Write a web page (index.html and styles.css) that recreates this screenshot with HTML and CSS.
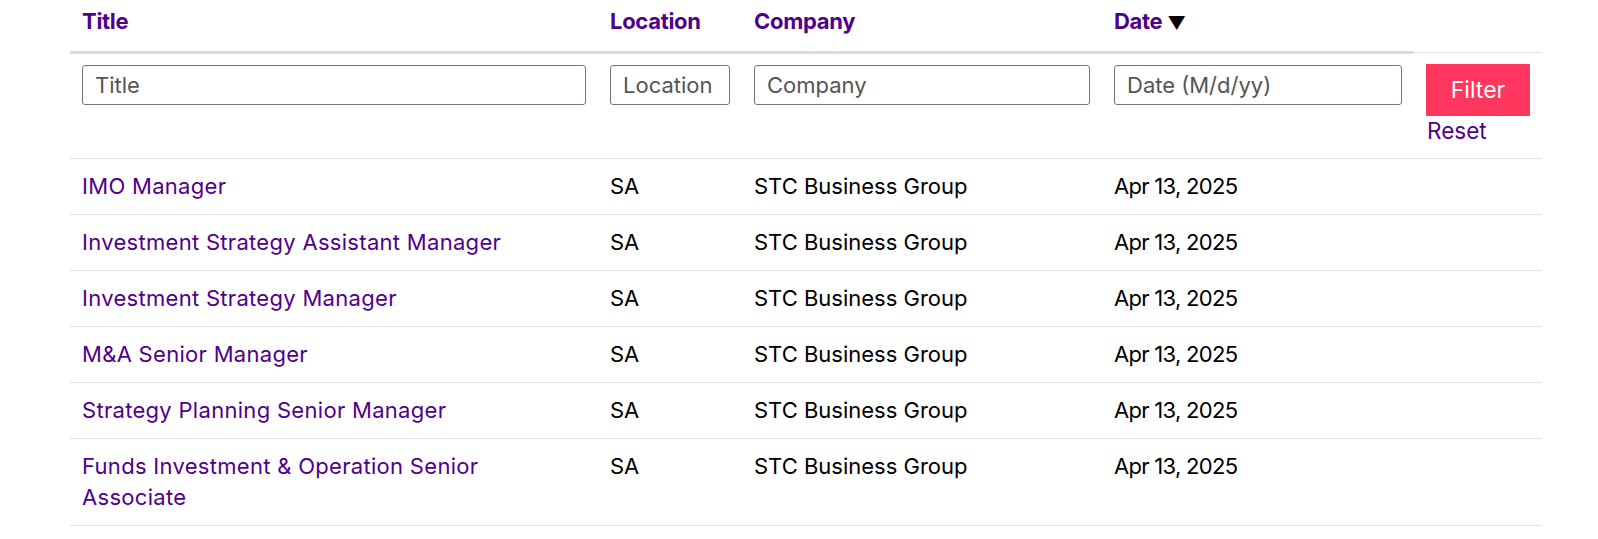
FILE: index.html
```html
<!DOCTYPE html>
<html lang="en">
<head>
<meta charset="utf-8">
<title>Jobs</title>
<link rel="stylesheet" href="styles.css">
</head>
<body>
<div class="wrap">
<table class="jobs">
  <colgroup>
    <col class="c-title"><col class="c-loc"><col class="c-comp"><col class="c-date"><col class="c-act">
  </colgroup>
  <thead>
    <tr class="head">
      <th>Title</th>
      <th>Location</th>
      <th>Company</th>
      <th>Date <span class="sort">▼</span></th>
      <th class="act"></th>
    </tr>
    <tr class="filters">
      <td><input class="inp" type="text" placeholder="Title"></td>
      <td><input class="inp" type="text" placeholder="Location"></td>
      <td><input class="inp" type="text" placeholder="Company"></td>
      <td><input class="inp" type="text" placeholder="Date (M/d/yy)"></td>
      <td><button class="btn" type="button">Filter</button><a class="reset" href="#">Reset</a></td>
    </tr>
  </thead>
  <tbody>
    <tr><td><a class="job" href="#">IMO Manager</a></td><td>SA</td><td>STC Business Group</td><td class="date">Apr 13, 2025</td><td></td></tr>
    <tr><td><a class="job" href="#">Investment Strategy Assistant Manager</a></td><td>SA</td><td>STC Business Group</td><td class="date">Apr 13, 2025</td><td></td></tr>
    <tr><td><a class="job" href="#">Investment Strategy Manager</a></td><td>SA</td><td>STC Business Group</td><td class="date">Apr 13, 2025</td><td></td></tr>
    <tr><td><a class="job" href="#">M&amp;A Senior Manager</a></td><td>SA</td><td>STC Business Group</td><td class="date">Apr 13, 2025</td><td></td></tr>
    <tr><td><a class="job" href="#">Strategy Planning Senior Manager</a></td><td>SA</td><td>STC Business Group</td><td class="date">Apr 13, 2025</td><td></td></tr>
    <tr><td><a class="job" href="#">Funds Investment &amp; Operation Senior Associate</a></td><td>SA</td><td>STC Business Group</td><td class="date">Apr 13, 2025</td><td></td></tr>
  </tbody>
</table>
</div>
</body>
</html>
```
FILE: styles.css
```css
html, body {
  margin: 0;
  padding: 0;
  background: #fff;
}
body {
  font-family: Inter, "Liberation Sans", sans-serif;
  font-size: 22px;
  color: #000;
}
.wrap {
  padding: 0 0 0 70px;
}
.jobs {
  border-collapse: collapse;
  width: 1472px;
  table-layout: fixed;
}
.c-title { width: 528px; }
.c-loc { width: 144px; }
.c-comp { width: 360px; }
.c-date { width: 312px; }
.c-act { width: 128px; }

.jobs th, .jobs td {
  padding: 12px 12px;
  text-align: left;
  vertical-align: top;
  line-height: 31px;
}
.head th {
  padding: 6px 12px 13px;
  font-weight: 700;
  color: #4f008c;
  border-bottom: 3px solid #dcdcdc;
  letter-spacing: -0.3px;
}
.head th.act {
  border-bottom: 1px solid #e2e2e2;
}
.sort {
  color: #000;
  font-size: 18px;
}
.filters td {
  padding: 11px 12px 12px;
}
.inp {
  display: block;
  box-sizing: border-box;
  width: 100%;
  height: 40px;
  margin: 0;
  padding: 0 12px;
  border: 1px solid #767676;
  border-radius: 3px;
  font: inherit;
  font-size: 22px;
  color: #333;
  background: #fff;
}
.inp::placeholder {
  color: #555;
}
.btn {
  display: block;
  width: 100%;
  height: 52px;
  margin: 0;
  border: 0;
  background: #ff375e;
  color: #fff;
  font: inherit;
  font-size: 23px;
  padding: 0;
  cursor: pointer;
}
.reset {
  display: block;
  color: #4f008c;
  text-decoration: none;
  line-height: 30px;
  padding-left: 1px;
  font-size: 22.5px;
}
tbody td {
  border-top: 1px solid #dee2e6;
  border-bottom: 1px solid #dee2e6;
}
.job {
  color: #4f008c;
  text-decoration: none;
  letter-spacing: 0.3px;
}
.date {
  letter-spacing: -0.7px;
}
```
